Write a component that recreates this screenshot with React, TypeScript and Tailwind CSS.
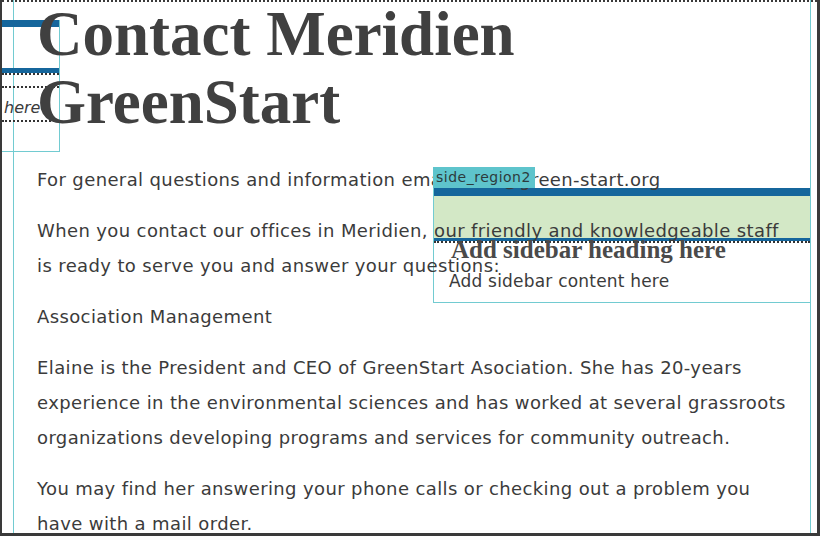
import React from 'react'

const bodyFont = { fontFamily: '"DejaVu Sans", sans-serif' }

const App = () => {
  return (
    <div className="relative w-[820px] h-[536px] overflow-hidden bg-white border-l-2 border-r-[3px] border-b-[3px] border-[#3a3a3a]">
      {/* dotted top edge of the design view */}
      <div className="absolute left-0 right-0 top-0 h-0 border-t-2 border-dotted border-[#3a3a3a]" />

      {/* clipped side_region1 at the far left */}
      <div className="absolute left-0 top-[20px] w-[58px] h-[132px] border-r border-b border-[#72cbd1]">
        <div className="h-[7px] bg-[#15669c]" />
        <div className="h-[41px]" />
        <div className="h-[5px] bg-[#15669c]" />
        <div className="h-[13px] border-t-2 border-dotted border-[#333]" />
        <div className="h-[34px] border-t-2 border-dotted border-[#333] pl-[2px] pt-[7px]">
          <span className="italic text-[16px] leading-[20px] text-[#3b3b3b]" style={bodyFont}>here</span>
        </div>
        <div className="border-t-2 border-dotted border-[#333]" />
      </div>

      {/* side_region2 overlay */}
      <div className="absolute left-[431px] top-[168px] w-[377px] h-[135px] border-l border-b border-[#72cbd1]">
        <div className="h-[20px]" />
        <div className="h-[8px] bg-[#15669c]" />
        <div className="h-[42px] bg-[#d3e8c6]" />
        <div className="h-[3px] bg-[#15669c]" />
        <div className="border-t-2 border-dotted border-[#333]" />
        <div className="pl-[17px] -mt-[8px] text-[25px] leading-[30px] font-bold text-[#4a4a4a]" style={{ fontFamily: '"Liberation Serif", serif' }}>
          Add sidebar heading here
        </div>
        <div className="pl-[15px] mt-[4px] text-[17px] leading-[24px] tracking-[0.2px] text-[#3b3b3b]" style={bodyFont}>
          Add sidebar content here
        </div>
      </div>

      <div className="ml-[11px] w-[798px] h-full border-x border-[#72cbd1] pl-[23px] pr-[20px]">
        <h1 className="relative z-10 text-[63px] leading-[68px] font-bold text-[#404040]" style={{ fontFamily: '"Liberation Serif", serif' }}>
          Contact Meridien
          <br />
          GreenStart
        </h1>
        <div className="relative z-10 mt-[26px] flex flex-col gap-[16px] text-[18px] leading-[35px] tracking-[0.38px] text-[#3b3b3b] whitespace-nowrap" style={bodyFont}>
          <p>For general questions and information email: info@green-start.org</p>
          <p>
            When you contact our offices in Meridien, our friendly and knowledgeable staff
            <br />
            is ready to serve you and answer your questions:
          </p>
          <p>Association Management</p>
          <p>
            Elaine is the President and CEO of GreenStart Asociation. She has 20-years
            <br />
            experience in the environmental sciences and has worked at several grassroots
            <br />
            organizations developing programs and services for community outreach.
          </p>
          <p>
            You may find her answering your phone calls or checking out a problem you
            <br />
            have with a mail order.
          </p>
        </div>
      </div>

      {/* region label sits above the text */}
      <div className="absolute left-[431px] top-[167px] z-20 w-[102px] h-[21px] bg-[#5ec4cc] pl-[3px] pt-[1px] text-[14px] leading-[19px] tracking-[0.5px] text-[#2d3b3d]" style={bodyFont}>
        side_region2
      </div>
    </div>
  )
}

export default App
